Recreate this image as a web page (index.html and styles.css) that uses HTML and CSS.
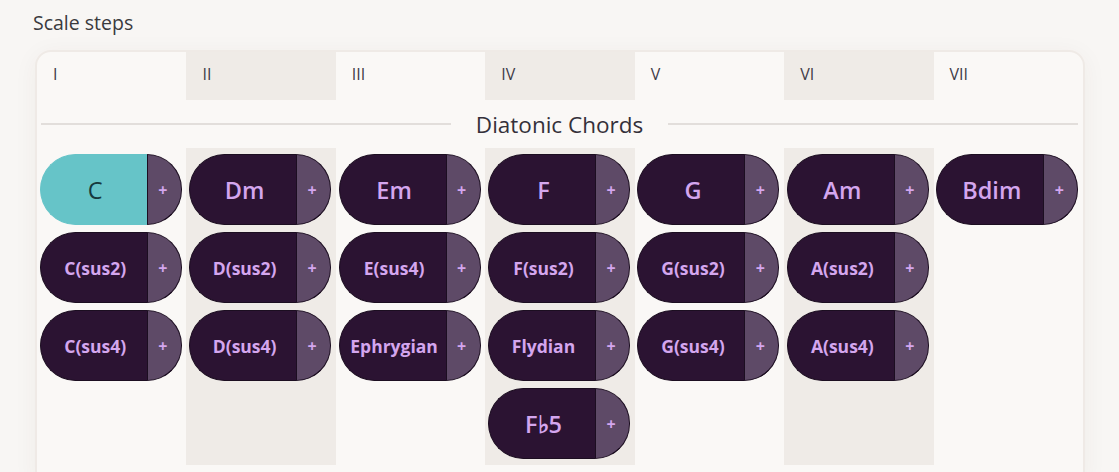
FILE: index.html
```html
<!DOCTYPE html>
<html>
<head>
<meta charset="utf-8">
<link rel="stylesheet" href="styles.css">
</head>
<body>
<div class="page">
  <div class="label">Scale steps</div>
  <div class="card">
    <div class="steps">
      <div class="step">I</div>
      <div class="step alt">II</div>
      <div class="step">III</div>
      <div class="step alt">IV</div>
      <div class="step">V</div>
      <div class="step alt">VI</div>
      <div class="step">VII</div>
    </div>
    <div class="section">
      <span class="rule"></span>
      <span class="section-title">Diatonic Chords</span>
      <span class="rule"></span>
    </div>
    <div class="chords">
      <div class="col">
        <div class="chord selected big"><span class="name">C</span><span class="add">+</span></div>
        <div class="chord"><span class="name">C(sus2)</span><span class="add">+</span></div>
        <div class="chord"><span class="name">C(sus4)</span><span class="add">+</span></div>
      </div>
      <div class="col alt">
        <div class="chord big"><span class="name">Dm</span><span class="add">+</span></div>
        <div class="chord"><span class="name">D(sus2)</span><span class="add">+</span></div>
        <div class="chord"><span class="name">D(sus4)</span><span class="add">+</span></div>
      </div>
      <div class="col">
        <div class="chord big"><span class="name">Em</span><span class="add">+</span></div>
        <div class="chord"><span class="name">E(sus4)</span><span class="add">+</span></div>
        <div class="chord"><span class="name">Ephrygian</span><span class="add">+</span></div>
      </div>
      <div class="col alt">
        <div class="chord big"><span class="name">F</span><span class="add">+</span></div>
        <div class="chord"><span class="name">F(sus2)</span><span class="add">+</span></div>
        <div class="chord"><span class="name">Flydian</span><span class="add">+</span></div>
        <div class="chord big"><span class="name">F♭5</span><span class="add">+</span></div>
      </div>
      <div class="col">
        <div class="chord big"><span class="name">G</span><span class="add">+</span></div>
        <div class="chord"><span class="name">G(sus2)</span><span class="add">+</span></div>
        <div class="chord"><span class="name">G(sus4)</span><span class="add">+</span></div>
      </div>
      <div class="col alt">
        <div class="chord big"><span class="name">Am</span><span class="add">+</span></div>
        <div class="chord"><span class="name">A(sus2)</span><span class="add">+</span></div>
        <div class="chord"><span class="name">A(sus4)</span><span class="add">+</span></div>
      </div>
      <div class="col">
        <div class="chord big"><span class="name">Bdim</span><span class="add">+</span></div>
      </div>
    </div>
  </div>
</div>
</body>
</html>
```
FILE: styles.css
```css
html, body {
  margin: 0;
  padding: 0;
  background: #f8f6f4;
  font-family: "Open Sans", "Noto Sans", sans-serif;
  color: #35313a;
  overflow: hidden;
}

.page {
  padding: 10px 0 0 33px;
}

.label {
  font-size: 19.5px;
  line-height: 26px;
  color: #3a3a3e;
  margin-bottom: 14px;
}

.card {
  margin-left: 2px;
  width: 1046px;
  background: #faf8f6;
  border: 2px solid #efeae6;
  border-radius: 16px;
  box-shadow: 0 4px 24px rgba(80, 60, 40, 0.05);
  padding-bottom: 20px;
}

.steps {
  display: grid;
  grid-template-columns: repeat(7, 1fr);
  height: 48px;
}

.step {
  padding-left: 16px;
  font-size: 16px;
  line-height: 44px;
  color: #3f3b47;
}

.step.alt {
  background: #efebe7;
}

.section {
  display: flex;
  align-items: center;
  height: 48px;
  padding: 0 5px 0 4px;
  gap: 25px;
}

.rule {
  flex: 1;
  height: 2px;
  background: #e2dedb;
}

.section-title {
  font-size: 22.5px;
  color: #34303a;
}

.chords {
  display: grid;
  grid-template-columns: repeat(7, 1fr);
  align-items: stretch;
}

.col {
  display: flex;
  flex-direction: column;
  align-items: center;
  gap: 7px;
  padding: 6px 0 6px;
  min-height: 305px;
}

.col.alt {
  background: #efebe7;
}

.chord {
  display: flex;
  width: 142px;
  height: 71px;
  margin-left: -2px;
  font-weight: 700;
}

.chord .name {
  flex: 1;
  display: flex;
  align-items: center;
  justify-content: center;
  background: #2b1332;
  border: 1px solid #1c0e21;
  border-right: none;
  border-radius: 36px 0 0 36px;
  color: #d4a6ee;
  font-size: 17.5px;
  white-space: nowrap;
  padding-left: 3px;
}

.chord.big .name {
  font-size: 23.5px;
  font-weight: 600;
}

.chord .add {
  box-sizing: border-box;
  width: 35px;
  flex: none;
  display: flex;
  align-items: center;
  justify-content: center;
  background: #5e4a67;
  border: 1px solid #1c0e21;
  border-radius: 0 36px 36px 0;
  color: #d4a6ee;
  font-size: 16px;
  font-weight: 700;
  padding-right: 3px;
  padding-top: 1px;
}

.chord.selected .name {
  background: #66c4c8;
  border-color: #66c4c8;
  color: #163a3e;
  font-weight: 400;
}
```
